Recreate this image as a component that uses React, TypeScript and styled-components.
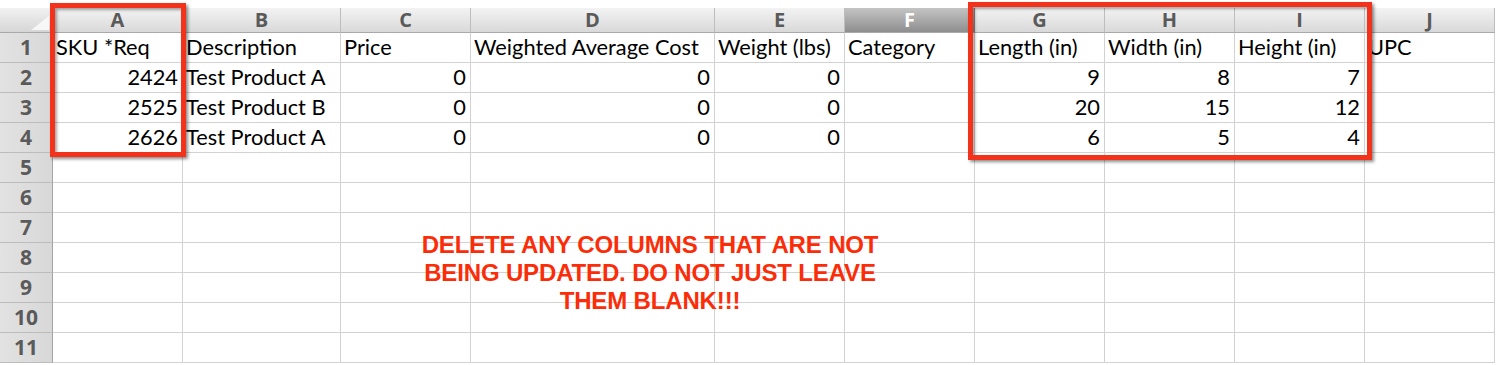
import React from "react";
import styled, { createGlobalStyle } from "styled-components";

const Global = createGlobalStyle`
  html, body { margin: 0; padding: 0; background: #fff; }
  body { width: 1497px; height: 365px; overflow: hidden; }
`;

const COLS = [130, 158, 130, 244, 130, 130, 130, 130, 130, 130];
const TEMPLATE_COLS = `53px ${COLS.map((c) => c + "px").join(" ")}`;
const TEMPLATE_ROWS = "25px repeat(11, 30px)";
const LETTERS = ["A", "B", "C", "D", "E", "F", "G", "H", "I", "J"];

const Page = styled.div`
  width: 1497px;
  height: 365px;
  padding-top: 8px;
  box-sizing: border-box;
  background: #fff;
  font-family: "Lato", "Open Sans", sans-serif;
`;

const Frame = styled.div`
  position: relative;
`;

const Sheet = styled.div`
  display: grid;
  grid-template-columns: ${TEMPLATE_COLS};
  grid-template-rows: ${TEMPLATE_ROWS};
`;

const Overlay = styled.div`
  position: absolute;
  inset: 0;
  display: grid;
  grid-template-columns: ${TEMPLATE_COLS};
  grid-template-rows: ${TEMPLATE_ROWS};
  pointer-events: none;
`;

const Corner = styled.div`
  display: flex;
  align-items: flex-end;
  justify-content: flex-end;
  padding: 0 3px 2px 0;
  background: linear-gradient(#f1f1f1, #d6d6d6);
  border-right: 1px solid #a9a9a9;
  border-bottom: 1px solid #a9a9a9;
  box-sizing: border-box;
`;

const ColHead = styled.div<{ $sel?: boolean }>`
  display: flex;
  align-items: center;
  justify-content: center;
  box-sizing: border-box;
  border-right: 1px solid ${(p) => (p.$sel ? "#8a8a8a" : "#bdbdbd")};
  border-bottom: 1px solid #a9a9a9;
  background: ${(p) =>
    p.$sel
      ? "linear-gradient(#c4c4c4, #8e8e8e)"
      : "linear-gradient(#f3f3f3, #d9d9d9)"};
  color: ${(p) => (p.$sel ? "#ffffff" : "#5a5a5a")};
  font-family: "Open Sans", "Lato", sans-serif;
  font-weight: 700;
  font-size: 20px;
  line-height: 1;
`;

const RowHead = styled.div`
  display: flex;
  align-items: center;
  justify-content: center;
  box-sizing: border-box;
  background: linear-gradient(90deg, #e2e2e2, #d8d8d8);
  border-right: 1px solid #a3a3a3;
  border-bottom: 1px solid #bcbcbc;
  color: #5a5a5a;
  font-family: "Open Sans", "Lato", sans-serif;
  font-weight: 700;
  font-size: 21px;
  line-height: 1;
`;

const Cell = styled.div<{ $num?: boolean }>`
  display: flex;
  align-items: center;
  justify-content: ${(p) => (p.$num ? "flex-end" : "flex-start")};
  padding: 0 4px 1px 3px;
  box-sizing: border-box;
  border-right: 1px solid #d2d2d2;
  border-bottom: 1px solid #d2d2d2;
  color: #000;
  font-size: 21.8px;
  white-space: nowrap;
  line-height: 1;
`;

const RedBox = styled.div<{ $cols: string; $rows: string; $m: string }>`
  grid-column: ${(p) => p.$cols};
  grid-row: ${(p) => p.$rows};
  margin: ${(p) => p.$m};
  border: 5px solid #f2321a;
  box-sizing: border-box;
  box-shadow: 2px 2px 3px rgba(0, 0, 0, 0.45), inset 2px 2px 3px rgba(0, 0, 0, 0.35);
`;

const Note = styled.div`
  grid-column: 4 / 8;
  grid-row: 8 / 12;
  padding: 18px 16px 0 0;
  text-align: center;
  color: #fb2d08;
  font-family: "Liberation Sans", Arial, sans-serif;
  font-weight: 700;
  font-size: 24px;
  line-height: 28px;
  letter-spacing: -0.15px;
`;

const header = [
  "SKU *Req",
  "Description",
  "Price",
  "Weighted Average Cost",
  "Weight (lbs)",
  "Category",
  "Length (in)",
  "Width (in)",
  "Height (in)",
  "UPC",
];

const data: (string | number)[][] = [
  [2424, "Test Product A", 0, 0, 0, "", 9, 8, 7, ""],
  [2525, "Test Product B", 0, 0, 0, "", 20, 15, 12, ""],
  [2626, "Test Product A", 0, 0, 0, "", 6, 5, 4, ""],
];

export default function App() {
  const rows: (string | number)[][] = [header, ...data];
  while (rows.length < 11) rows.push(Array(10).fill(""));
  return (
    <Page>
      <Global />
      <Frame>
        <Sheet>
          <Corner>
            <svg width="18" height="14" viewBox="0 0 18 14">
              <polygon points="18,0 18,14 0,14" fill="#f7f7f7" />
            </svg>
          </Corner>
          {LETTERS.map((l) => (
            <ColHead key={l} $sel={l === "F"}>
              {l}
            </ColHead>
          ))}
          {rows.map((r, ri) => (
            <React.Fragment key={ri}>
              <RowHead>{ri + 1}</RowHead>
              {r.map((v, ci) => (
                <Cell key={ci} $num={typeof v === "number"}>
                  {v}
                </Cell>
              ))}
            </React.Fragment>
          ))}
        </Sheet>
        <Overlay>
          <RedBox $cols="2 / 3" $rows="1 / 6" $m="-5px -3px -4px -3px" />
          <RedBox $cols="8 / 11" $rows="1 / 6" $m="-6px -7px -7px -7px" />
          <Note>
            DELETE ANY COLUMNS THAT ARE NOT
            <br />
            BEING UPDATED. DO NOT JUST LEAVE
            <br />
            THEM BLANK!!!
          </Note>
        </Overlay>
      </Frame>
    </Page>
  );
}
